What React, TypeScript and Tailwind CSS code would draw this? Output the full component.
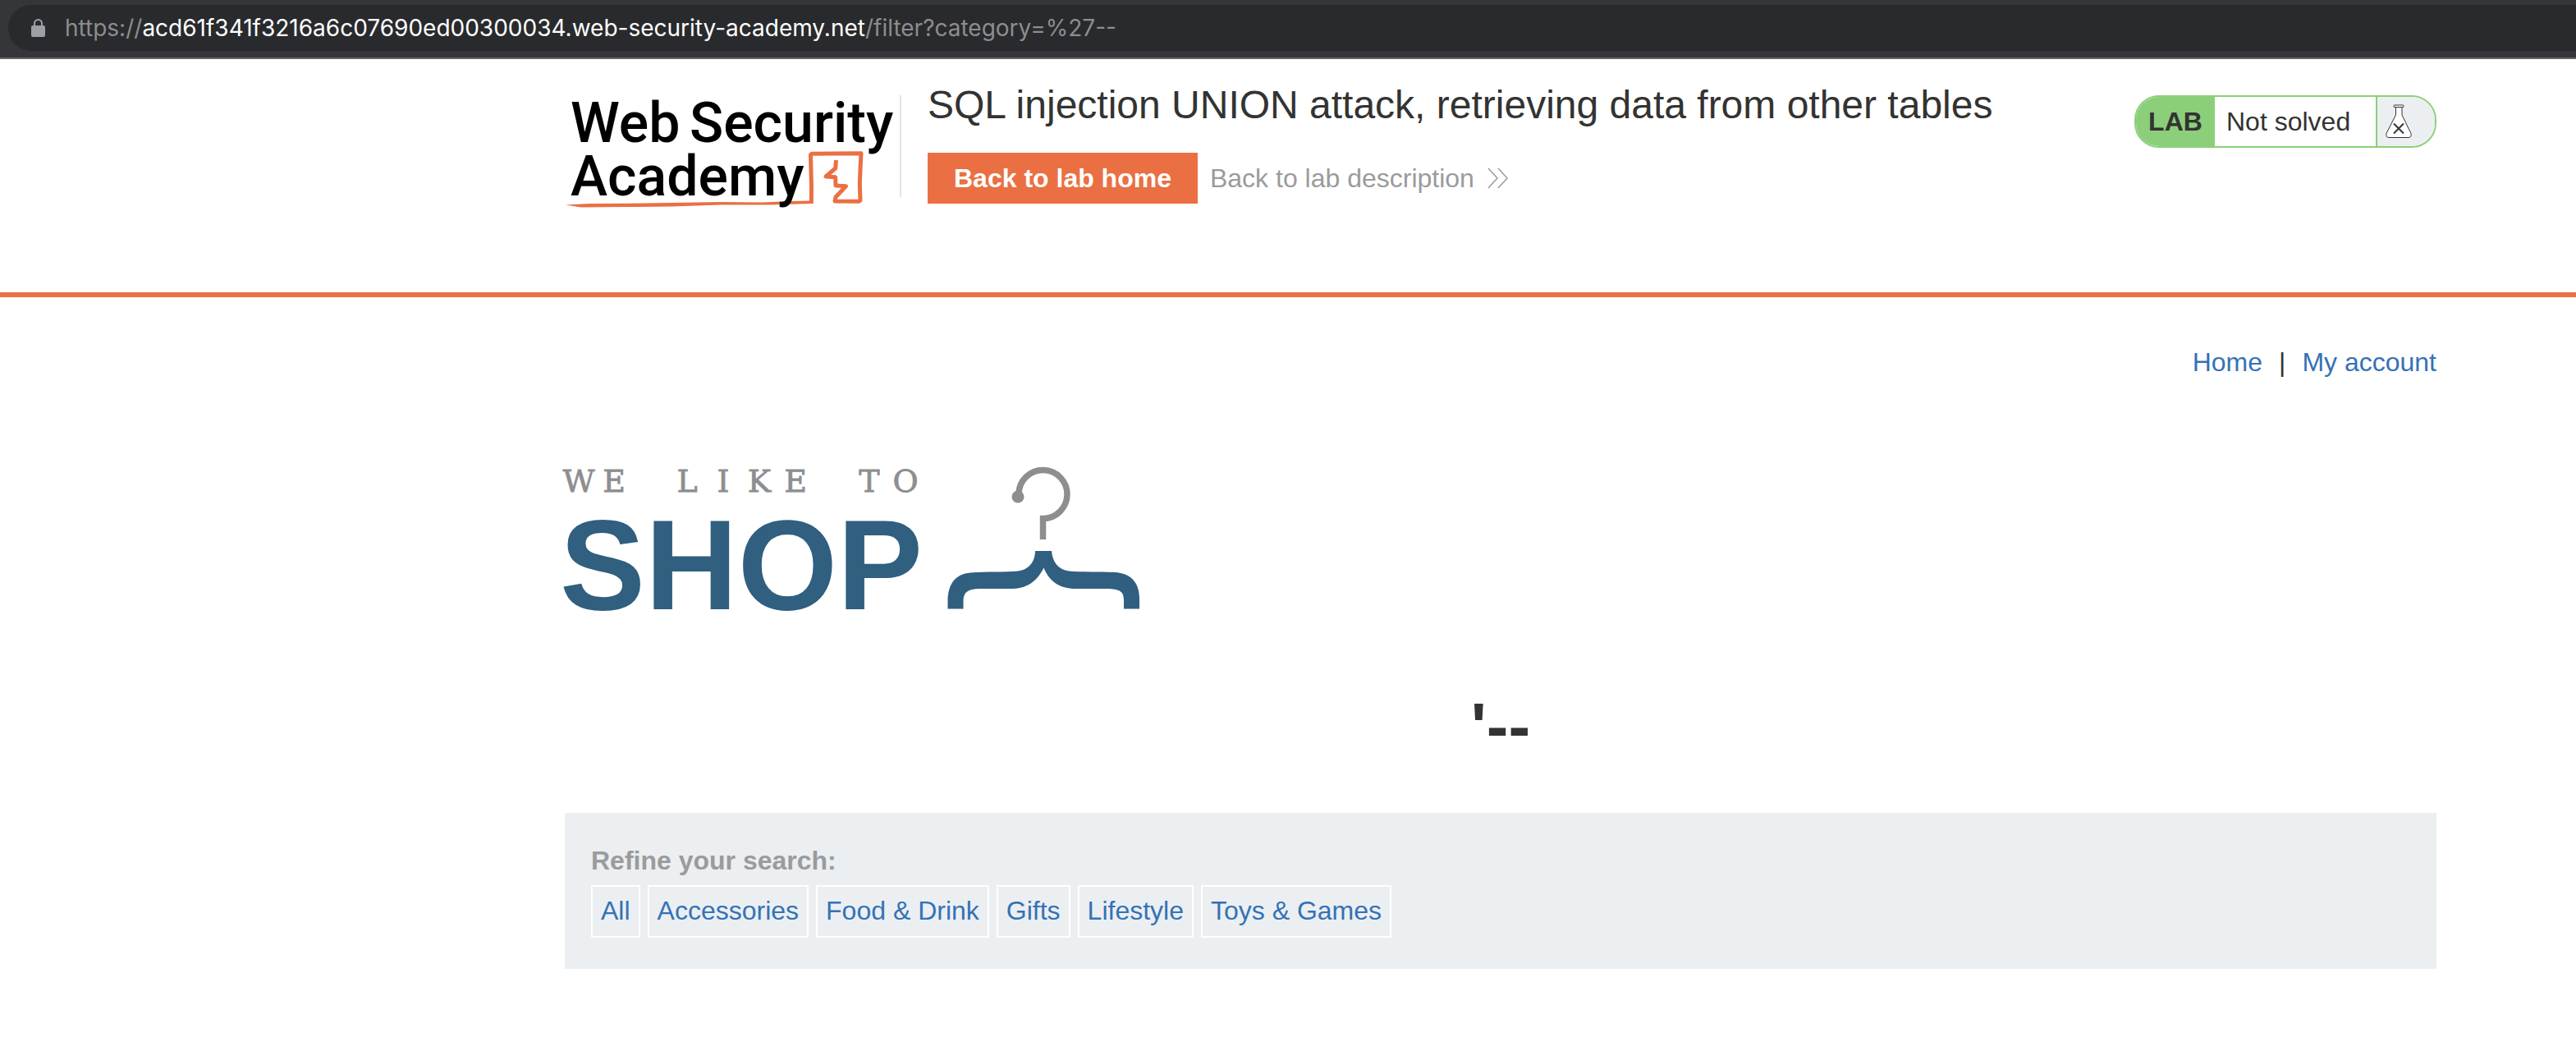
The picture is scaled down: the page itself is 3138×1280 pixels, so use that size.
import React from "react";

const CATEGORIES = ["All", "Accessories", "Food & Drink", "Gifts", "Lifestyle", "Toys & Games"];

function AddressBar() {
  return (
    <div className="border-b-2 border-[#6b656a] bg-[#35363a] pt-[6px] pb-2 pl-[10px]">
      <div className="flex h-14 items-center gap-6 rounded-l-full bg-[#292a2d] pl-7">
        <svg width="17" height="22" viewBox="0 0 17 22" aria-hidden="true">
          <rect x="0" y="8" width="17" height="14" rx="2" fill="#9aa0a4" />
          <path d="M4 9V5.500a4.500 4.500 0 0 1 9 0V9" fill="none" stroke="#9aa0a4" strokeWidth="2" />
        </svg>
        <p className="font-[Inter,sans-serif] text-[28px] leading-8 whitespace-nowrap text-[#8c8d8f]">
          https://
          <span className="text-white">acd61f341f3216a6c07690ed00300034.web-security-academy.net</span>
          /filter?category=%27--
        </p>
      </div>
    </div>
  );
}

function AcademyLogo() {
  return (
    <svg
      width="408"
      height="140"
      viewBox="0 0 408 140"
      className="overflow-visible"
      role="img"
      aria-label="Web Security Academy"
    >
      <path
        d="M1 133.500L30 132 95 131.500 190 130 240 130.500 275 129 301 128.500V132L250 133.500 190 133.500 130 135.500 90 136 20 136.500Z"
        fill="#ea7043"
      />
      <path
        d="M300.300 132L300.500 112 299.500 72.500 301 71.300 361 70.700 360 90 359.300 108 360 128 358 129.300 329 129 330 124 342.500 110.700 330 110 329.700 99.700 318 99 329.700 89 330.500 79"
        fill="none"
        stroke="#ea7043"
        strokeWidth="5"
        strokeLinejoin="round"
      />
      <g fill="#000" fontFamily="Roboto, sans-serif" fontWeight="500" fontSize="68">
        <text x="7" y="57">Web</text>
        <text x="152" y="57">Security</text>
        <text x="7" y="122">Academy</text>
      </g>
    </svg>
  );
}

function LabStatus() {
  return (
    <div className="flex h-16 items-stretch overflow-hidden rounded-[30px] border-2 border-[#8bcf7a] text-[#333332]">
      <strong className="flex w-24 items-center justify-center bg-[#8bcf7a] leading-9">LAB</strong>
      <p className="flex w-[196px] items-center px-[14px] leading-9 whitespace-nowrap">Not solved</p>
      <div className="flex w-[72px] items-center border-l-2 border-[#8bcf7a] bg-[#ebeff2] pl-[10px]">
        <svg width="32" height="42" viewBox="0 0 32 42" fill="#fff" stroke="#333332" aria-hidden="true">
          <path d="M12.500 3V13L1 35.500Q0 40.500 4 40.500H28Q32 40.500 31 35.500L20 13V3Z" />
          <rect x="10" y="1" width="12" height="2.500" rx="1" />
          <path d="M10 23.500L22 35.500M22 23.500L10 35.500" strokeWidth="2" />
        </svg>
      </div>
    </div>
  );
}

function Header() {
  return (
    <header className="flex h-[290px] items-start border-b-[6px] border-[#ea7043] pr-[170px] pl-[688px]">
      <div className="flex pt-[44px]">
        <AcademyLogo />
        <div className="h-[124px] w-[2px] bg-[#e5e5e5]" />
      </div>
      <div className="flex flex-1 flex-col items-start pt-7 pl-8">
        <h1 className="text-[48px] leading-[56px] whitespace-nowrap text-[#333332]">
          SQL injection UNION attack, retrieving data from other tables
        </h1>
        <div className="mt-[30px] flex items-center gap-[15px]">
          <a href="#home" className="bg-[#ea7043] px-8 py-[13px] leading-9 font-bold whitespace-nowrap text-white">
            Back to lab home
          </a>
          <a href="#description" className="flex items-center gap-4 leading-9 whitespace-nowrap text-[#9b9b9b]">
            Back to lab description
            <svg width="26" height="26" viewBox="0 0 26 26" fill="none" stroke="#9b9b9b" strokeWidth="1.500" aria-hidden="true">
              <path d="M1 1L12 13 1 25M13 1L24 13 13 25" />
            </svg>
          </a>
        </div>
      </div>
      <div className="pt-[44px]">
        <LabStatus />
      </div>
    </header>
  );
}

function ShopLogo() {
  return (
    <svg
      width="704"
      height="184"
      viewBox="0 0 704 184"
      className="overflow-visible"
      role="img"
      aria-label="We like to shop"
    >
      <text
        x="17 60 104 149 193 237 281 325 371 415"
        y="34"
        textAnchor="middle"
        fontFamily="'DejaVu Serif', serif"
        fontSize="38"
        fill="#8d8e90"
        stroke="#8d8e90"
        strokeWidth="0.800"
      >
        WE LIKE TO
      </text>
      <text x="-6" y="177" fontFamily="'Liberation Sans', sans-serif" fontWeight="700" fontSize="156" fill="#305f80">
        SHOP
      </text>
      <path d="M553 36A29.500 29.500 0 1 1 582.500 66.500V92" fill="none" stroke="#8d8e90" strokeWidth="7.500" />
      <circle cx="552" cy="40" r="7.500" fill="#8d8e90" />
      <path
        d="M573 106H593C594 120 602 129 614 130.500C630 132 650 131 670 132C690 133 700 145 700 164V176.500H681V166C681 155 676 152.500 660 152H622C603 152 590 143 583.500 126.500C576 141 566 151 546 152H505C491 152.500 486 156 485.500 166V176.500H466.500V166C467 146 476 134 494 132.500C515 131 535 132 552 130.500C566 129 573 118 573 106Z"
        fill="#305f80"
      />
    </svg>
  );
}

export default function App() {
  return (
    <div className="min-h-screen bg-white font-['Liberation_Sans',Arial,sans-serif] text-[32px]">
      <AddressBar />
      <Header />
      <main className="pr-[170px] pl-[688px]">
        <nav className="flex justify-end gap-5 pt-[61px] leading-9 text-[#333332]">
          <a href="#home" className="text-[#3572b5]">Home</a>
          <span>|</span>
          <a href="#account" className="text-[#3572b5]">My account</a>
        </nav>
        <div className="mt-[106px]">
          <ShopLogo />
        </div>
        <h2 className="mt-[90px] text-center text-[80px] leading-[92px] font-bold text-[#333332]">'--</h2>
        <section className="mt-[59px] bg-[#ebeff2] px-8 pt-10 pb-[38px]">
          <p className="leading-9 font-bold text-[#9b9b9b]">Refine your search:</p>
          <div className="mt-3 flex flex-wrap gap-[9px]">
            {CATEGORIES.map((name) => (
              <a
                key={name}
                href="#filter"
                className="border-2 border-white px-[10px] pt-[11px] pb-[13px] leading-9 whitespace-nowrap text-[#3572b5]"
              >
                {name}
              </a>
            ))}
          </div>
        </section>
      </main>
    </div>
  );
}
